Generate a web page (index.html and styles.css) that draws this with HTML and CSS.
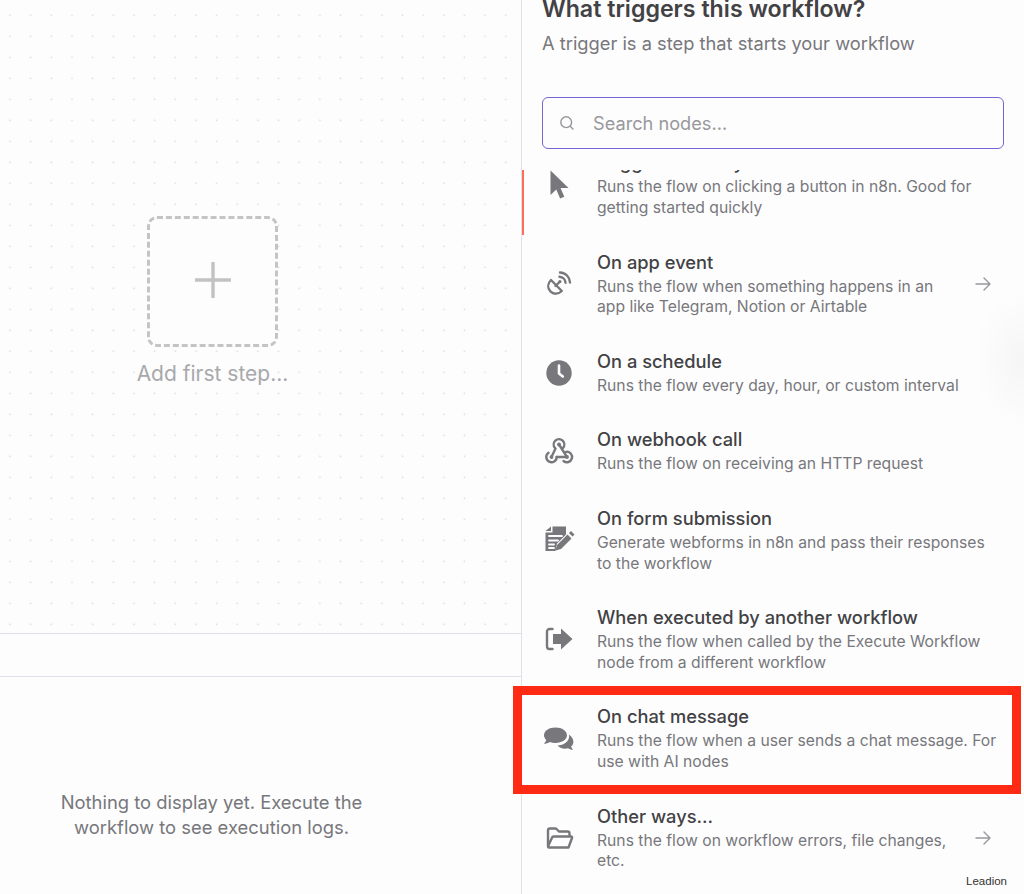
FILE: index.html
```html
<!DOCTYPE html>
<html lang="en">
<head>
<meta charset="utf-8">
<title>What triggers this workflow?</title>
<link rel="stylesheet" href="styles.css">
</head>
<body>
<div class="app">
  <main class="left">
    <section class="canvas">
      <button class="add-box" type="button" aria-label="Add first step">
        <svg class="plus" viewBox="0 0 36 36" width="36" height="36"><path d="M18 1v34M1 18h34"/></svg>
      </button>
      <div class="add-label">Add first step...</div>
    </section>
    <div class="bar"></div>
    <section class="logs">
      <p>Nothing to display yet. Execute the<br>workflow to see execution logs.</p>
    </section>
  </main>
  <aside class="panel">
    <header class="head">
      <h1>What triggers this workflow?</h1>
      <p>A trigger is a step that starts your workflow</p>
    </header>
    <div class="search">
      <svg class="search-icon" viewBox="0 0 16 16" width="16" height="16"><circle cx="7.2" cy="7.2" r="5.4"/><path d="M11.2 11.2l3.2 3.2"/></svg>
      <span>Search nodes...</span>
    </div>
    <div class="list">
      <div class="rows">
        <div class="row">
          <svg class="ico" viewBox="0 0 34 34" width="34" height="34"><path d="M8.500 3.500v24.500l5.800-5.400 3.800 8.900 4.200-1.800-3.800-8.800h8z"/></svg>
          <div class="txt"><h2>Trigger manually</h2><p>Runs the flow on clicking a button in n8n. Good for getting started quickly</p></div>
        </div>
        <div class="row arrowed">
          <svg class="ico" viewBox="0 0 34 34" width="34" height="34"><path class="ln" d="M9 13c-3.600 3.600-3.600 8.200-.6 11.400 3 3 7.800 3.200 11.400-.4z"/><path class="ln" d="M13.500 19l4-4"/><circle cx="17.900" cy="14.600" r="1.600"/><path class="ln" d="M17.500 9.800c3.200.2 5.800 2.800 6 6M18 5.500c5.600.2 9.800 4.500 10 10"/></svg>
          <div class="txt"><h2>On app event</h2><p>Runs the flow when something happens in an app like Telegram, Notion or Airtable</p></div>
          <svg class="arrow" viewBox="0 0 16 16" width="16" height="16"><path d="M1 8h14M9 2l6 6-6 6"/></svg>
        </div>
        <div class="row">
          <svg class="ico" viewBox="0 0 34 34" width="34" height="34"><circle cx="17" cy="17" r="12.700"/><path class="w" d="M17 9.500v8l3.800 3"/></svg>
          <div class="txt"><h2>On a schedule</h2><p>Runs the flow every day, hour, or custom interval</p></div>
        </div>
        <div class="row">
          <svg class="ico" viewBox="0 0 34 34" width="34" height="34"><g class="ln hook"><path d="M13 14A5.300 5.300 0 1 1 21 14"/><path d="M6.500 18.800A5.200 5.200 0 1 0 14.700 23"/><path d="M21.500 27A5.200 5.200 0 1 0 24 17.900"/><path d="M17 10.500L25 23H14.700M13.500 14.500L9.500 23"/></g><circle cx="17" cy="10.500" r="1.900"/><circle cx="9.500" cy="23" r="1.900"/><circle cx="25" cy="23" r="1.900"/></svg>
          <div class="txt"><h2>On webhook call</h2><p>Runs the flow on receiving an HTTP request</p></div>
        </div>
        <div class="row">
          <svg class="ico" viewBox="0 0 34 34" width="34" height="34"><path d="M3.500 8L9 3.500V8zM10.500 3.500H24v8l-9 9-1.500 7.500h-10V9.500h7z"/><path class="w thin" d="M7 13h13M7 17.500h9M7 21.500h5M7 25h5"/><path d="M25.500 11.500l4 4-10.500 10.500-5.500 1.500 1.500-5.500zM27 10l2-2 3.500 3.500-2 2z"/></svg>
          <div class="txt"><h2>On form submission</h2><p>Generate webforms in n8n and pass their responses to the workflow</p></div>
        </div>
        <div class="row">
          <svg class="ico" viewBox="0 0 34 34" width="34" height="34"><path d="M19 6.500L30.500 17 19 27.500V22h-8v-10h8z"/><path class="ln" d="M10.500 7H7.500A2.500 2.500 0 0 0 5 9.500v15A2.500 2.500 0 0 0 7.500 27h3"/></svg>
          <div class="txt"><h2>When executed by another workflow</h2><p>Runs the flow when called by the Execute Workflow node from a different workflow</p></div>
        </div>
        <div class="row">
          <svg class="ico" viewBox="0 0 34 34" width="34" height="34"><path d="M13.500 6.500C7 6.500 2 9.900 2 14.200c0 1.900.9 3.500 2.300 4.800C3.700 20.700 2.600 22 2 22.700c2 0 4.300-.8 5.800-1.800 1.700.6 3.600 1 5.700 1 6.500 0 11.500-3.500 11.500-7.700S20 6.500 13.500 6.500z"/><path d="M26.800 13.500c.3.700.3 1.300.3 2 0 5-5.500 8.800-11.500 9 1.500 2 4.200 3.200 7.400 3.200 1.100 0 2.100-.2 3-.5 1.300.9 3 1.500 5 1.500-.6-.7-1.500-1.800-2-3.100 1.500-1.200 2.400-2.900 2.400-4.700 0-3-1.900-5.600-4.600-7.400z"/></svg>
          <div class="txt"><h2>On chat message</h2><p>Runs the flow when a user sends a chat message. For use with AI nodes</p></div>
        </div>
        <div class="row arrowed">
          <svg class="ico" viewBox="0 0 34 34" width="34" height="34"><path class="ln" d="M6 25V9.500A2 2 0 0 1 8 7.500h6l3 3h8.500a2 2 0 0 1 2 2V15M6 25.500a1 1 0 0 0 1 1h19.500L30 17a1 1 0 0 0-1-1.500H11.500a1.500 1.500 0 0 0-1.400 1z"/></svg>
          <div class="txt"><h2>Other ways...</h2><p>Runs the flow on workflow errors, file changes, etc.</p></div>
          <svg class="arrow" viewBox="0 0 16 16" width="16" height="16"><path d="M1 8h14M9 2l6 6-6 6"/></svg>
        </div>
      </div>
      <i class="accent"></i>
    </div>
    <div class="glow"></div>
    <div class="mark"></div>
  </aside>
  <div class="leadion">Leadion</div>
</div>
</body>
</html>
```

FILE: styles.css
```css
* { box-sizing: border-box; }
html, body { margin: 0; height: 100%; }
body {
  background: #fdfdfd;
  color: #424242;
  font-family: Inter, "Liberation Sans", sans-serif;
  overflow: hidden;
}
.app {
  position: relative;
  display: flex;
  width: 1024px;
  height: 894px;
  overflow: hidden;
}
.left {
  display: flex;
  flex-direction: column;
  width: 521px;
  flex: none;
}
.canvas {
  display: flex;
  flex-direction: column;
  align-items: center;
  height: 634px;
  padding-top: 216px;
  padding-right: 96px;
  border-bottom: 1px solid #dfe1ea;
  background-image: radial-gradient(circle, #dedee2 0.8px, transparent 1.1px);
  background-size: 20.67px 21px;
  background-position: -0.3px 4.8px;
}
.add-box {
  display: flex;
  align-items: center;
  justify-content: center;
  width: 131px;
  height: 131px;
  padding: 0 0 4px;
  background: #fdfdfd;
  border: 3px dashed #c4c4c6;
  border-radius: 10px;
}
.plus path {
  fill: none;
  stroke: #c2c2c4;
  stroke-width: 3.4;
  stroke-linecap: round;
}
.add-label {
  margin-top: 12px;
  font-size: 21px;
  line-height: 30px;
  color: #a8a8ac;
}
.bar {
  height: 43px;
  border-bottom: 1px solid #dfe1ea;
}
.logs {
  flex: 1;
  padding-top: 113px;
  padding-right: 98px;
  text-align: center;
}
.logs p {
  margin: 0;
  font-size: 18.4px;
  line-height: 25px;
  color: #77777c;
}
.panel {
  position: relative;
  display: flex;
  flex-direction: column;
  flex: 1;
  min-width: 0;
  border-left: 1px solid #dfe1ea;
  background: #fdfdfd;
}
.head {
  padding: 0 20px;
}
.head h1 {
  margin: -6px 0 0;
  font-size: 23.2px;
  line-height: 30px;
  font-weight: 600;
  color: #424245;
}
.head p {
  margin: 6px 0 0;
  font-size: 18.3px;
  line-height: 26px;
  color: #77777c;
}
.search {
  display: flex;
  align-items: center;
  height: 52px;
  margin: 41px 20px 21px;
  padding-left: 16px;
  border: 1.5px solid #7567d3;
  border-radius: 6px;
  font-size: 18.2px;
  color: #98989c;
}
.search-icon {
  flex: none;
  margin-right: 18px;
}
.search-icon circle, .search-icon path {
  fill: none;
  stroke: #98989c;
  stroke-width: 1.4;
}
.list {
  position: relative;
  flex: 1;
  min-height: 0;
  overflow: hidden;
}
.rows {
  margin-top: -35.2px;
}
.row {
  display: flex;
  align-items: center;
  padding: 0 22px 0 20px;
}
.row .txt {
  flex: 1;
  min-width: 0;
  padding: 15.6px 0 15.07px 21px;
}
.row h2 {
  margin: 0;
  font-size: 18.3px;
  line-height: 24px;
  font-weight: 500;
  color: #424245;
}
.row p {
  margin: 3px 0 0;
  font-size: 15.7px;
  line-height: 20.8px;
  color: #77777c;
}
.ico {
  flex: none;
  fill: #77777c;
}
.ico .ln {
  fill: none;
  stroke: #77777c;
  stroke-width: 2.4;
  stroke-linecap: round;
  stroke-linejoin: round;
}
.ico .w {
  fill: none;
  stroke: #fdfdfd;
  stroke-width: 2.6;
  stroke-linecap: round;
  stroke-linejoin: round;
}
.ico .thin { stroke-width: 1.8; }
.arrow {
  flex: none;
  margin: 0 11px 0 18px;
}
.arrow path {
  fill: none;
  stroke: #98989c;
  stroke-width: 1.4;
  stroke-linecap: round;
  stroke-linejoin: round;
}
.accent {
  position: absolute;
  left: -1px;
  top: 0;
  width: 3px;
  height: 65px;
  background: #ff6d5a;
}
.glow {
  position: absolute;
  right: 0;
  top: 290px;
  width: 50px;
  height: 140px;
  background: radial-gradient(ellipse 50px 70px at 100% 50%, rgba(0, 0, 0, 0.03), transparent);
  pointer-events: none;
}
.mark {
  position: absolute;
  left: -9px;
  top: 686px;
  width: 508px;
  height: 107.5px;
  border: 9.5px solid #ff2a14;
  pointer-events: none;
}
.leadion {
  position: absolute;
  right: 17px;
  bottom: 6px;
  font-family: "Liberation Sans", sans-serif;
  font-size: 11.5px;
  line-height: 14px;
  color: #333;
}
```
